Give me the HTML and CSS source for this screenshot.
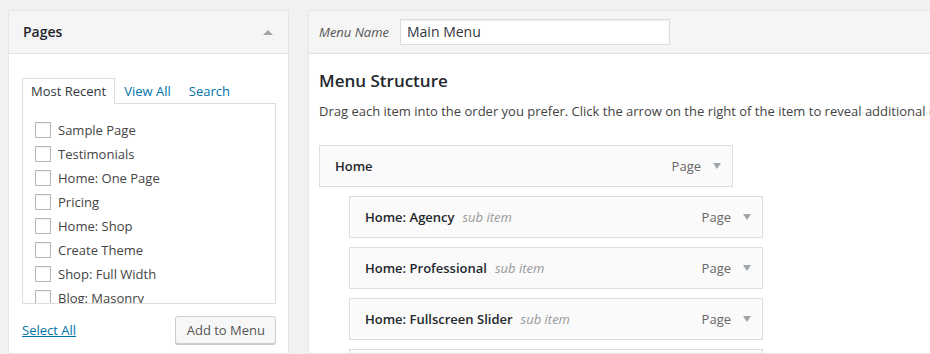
FILE: index.html
```html
<!DOCTYPE html>
<html>
<head>
<meta charset="utf-8">
<link rel="stylesheet" href="styles.css">
</head>
<body>
<div class="page">
  <div class="side">
    <div class="side-head">
      <span class="side-title">Pages</span>
      <span class="tri-up"></span>
    </div>
    <div class="side-body">
      <div class="tabs">
        <span class="tab active">Most Recent</span>
        <a class="tab" href="#">View All</a>
        <a class="tab" href="#">Search</a>
      </div>
      <div class="tab-panel">
        <ul class="checklist">
          <li><span class="cb"></span>Sample Page</li>
          <li><span class="cb"></span>Testimonials</li>
          <li><span class="cb"></span>Home: One Page</li>
          <li><span class="cb"></span>Pricing</li>
          <li><span class="cb"></span>Home: Shop</li>
          <li><span class="cb"></span>Create Theme</li>
          <li><span class="cb"></span>Shop: Full Width</li>
          <li><span class="cb"></span>Blog: Masonry</li>
        </ul>
      </div>
      <div class="actions">
        <a class="select-all" href="#">Select All</a>
        <button class="btn">Add to Menu</button>
      </div>
    </div>
  </div>
  <div class="main">
    <div class="main-head">
      <label class="name-label">Menu Name</label>
      <div class="name-input">Main Menu</div>
    </div>
    <div class="main-body">
      <h3 class="heading">Menu Structure</h3>
      <p class="desc">Drag each item into the order you prefer. Click the arrow on the right of the item to reveal additional configuration options.</p>
      <div class="items">
        <div class="item"><span class="item-title">Home</span><span class="item-type">Page</span><span class="tri-down"></span></div>
        <div class="item sub"><span class="item-title">Home: Agency</span><span class="sub-label">sub item</span><span class="item-type">Page</span><span class="tri-down"></span></div>
        <div class="item sub"><span class="item-title">Home: Professional</span><span class="sub-label">sub item</span><span class="item-type">Page</span><span class="tri-down"></span></div>
        <div class="item sub"><span class="item-title">Home: Fullscreen Slider</span><span class="sub-label">sub item</span><span class="item-type">Page</span><span class="tri-down"></span></div>
        <div class="item sub empty"></div>
      </div>
    </div>
  </div>
</div>
</body>
</html>
```

FILE: styles.css
```css
* { box-sizing: border-box; }
html, body { margin: 0; padding: 0; }
body {
  background: #f1f1f1;
  font-family: "Open Sans", "Noto Sans", sans-serif;
  font-size: 13px;
  color: #444;
  width: 930px;
  height: 354px;
  overflow: hidden;
}
.page {
  display: flex;
  align-items: flex-start;
  gap: 19px;
  padding: 10px 0 0 8px;
  height: 354px;
  overflow: hidden;
}
.side {
  width: 281px;
  flex: none;
  background: #fff;
  border: 1px solid #e5e5e5;
  height: 344px;
}
.side-head {
  height: 43px;
  background: #f5f5f5;
  border-bottom: 1px solid #e1e1e1;
  display: flex;
  align-items: center;
  justify-content: space-between;
  padding: 0 14px 0 14px;
}
.side-title {
  font-size: 14px;
  font-weight: 600;
  color: #23282d;
  line-height: 20px;
}
.tri-up {
  width: 0; height: 0;
  border-left: 5px solid transparent;
  border-right: 5px solid transparent;
  border-bottom: 5px solid #a0a5aa;
  margin-right: 1px;
}
.side-body {
  padding: 24px 12px 0 13px;
}
.tabs {
  display: flex;
  height: 25px;
  position: relative;
  z-index: 1;
}
.tab {
  display: block;
  padding: 3px 8px 3px 8px;
  line-height: 18px;
  border: 1px solid transparent;
  border-bottom: none;
  color: #0073aa;
  text-decoration: none;
}
.tab.active {
  color: #32373c;
  background: #fff;
  border-color: #dddddd;
  height: 26px;
}
.tab-panel {
  height: 201px;
  border: 1px solid #dddddd;
  overflow: hidden;
  background: #fff;
}
.checklist {
  list-style: none;
  margin: 0;
  padding: 14px 0 0 12px;
}
.checklist li {
  height: 24px;
  display: flex;
  align-items: center;
  color: #444;
  line-height: 24px;
  white-space: nowrap;
}
.cb {
  width: 16px; height: 16px;
  border: 1px solid #b4b9be;
  background: #fff;
  margin-right: 7px;
  flex: none;
  box-shadow: inset 0 1px 2px rgba(0,0,0,0.07);
}
.actions {
  display: flex;
  align-items: center;
  justify-content: space-between;
  margin-top: 12px;
}
.select-all {
  color: #0073aa;
  text-decoration: underline;
  line-height: 20px;
}
.btn {
  font-family: inherit;
  font-size: 13px;
  color: #555;
  background: #f7f7f7;
  border: 1px solid #cccccc;
  border-radius: 3px;
  height: 28px;
  line-height: 26px;
  padding: 0 10px 0 11px;
  white-space: nowrap;
  box-shadow: 0 1px 0 #cccccc;
}
.main {
  flex: none;
  width: 640px;
  background: #fff;
  border: 1px solid #e5e5e5;
  height: 344px;
  overflow: hidden;
}
.main-head {
  height: 43px;
  background: #f5f5f5;
  border-bottom: 1px solid #dfdfdf;
  display: flex;
  align-items: center;
  padding: 0 10px;
}
.name-label {
  font-style: italic;
  color: #555;
  width: 81px;
  flex: none;
}
.name-input {
  width: 270px;
  height: 26px;
  background: #fff;
  border: 1px solid #dddddd;
  box-shadow: inset 0 1px 2px rgba(0,0,0,0.07);
  color: #32373c;
  font-size: 14px;
  line-height: 24px;
  padding: 0 6px;
}
.main-body {
  padding: 15px 10px 0 10px;
}
.heading {
  margin: 0;
  font-size: 17px;
  font-weight: 600;
  line-height: 24px;
  color: #23282d;
}
.desc {
  margin: 8px 0 0 0;
  line-height: 20px;
  white-space: nowrap;
  color: #444;
}
.items {
  margin-top: 24px;
}
.item {
  width: 414px;
  height: 42px;
  margin-top: 9px;
  background: #fafafa;
  border: 1px solid #dfdfdf;
  display: flex;
  align-items: center;
  padding: 0 11px 0 15px;
  white-space: nowrap;
}
.item:first-child { margin-top: 0; }
.item.sub { margin-left: 30px; }
.item-title {
  font-weight: 600;
  color: #23282d;
}
.sub-label {
  font-style: italic;
  color: #999;
  margin-left: 8px;
}
.item-type {
  margin-left: auto;
  color: #666;
}
.tri-down {
  width: 0; height: 0;
  border-left: 4px solid transparent;
  border-right: 4px solid transparent;
  border-top: 6px solid #a0a5aa;
  margin-left: 12px;
}
```
